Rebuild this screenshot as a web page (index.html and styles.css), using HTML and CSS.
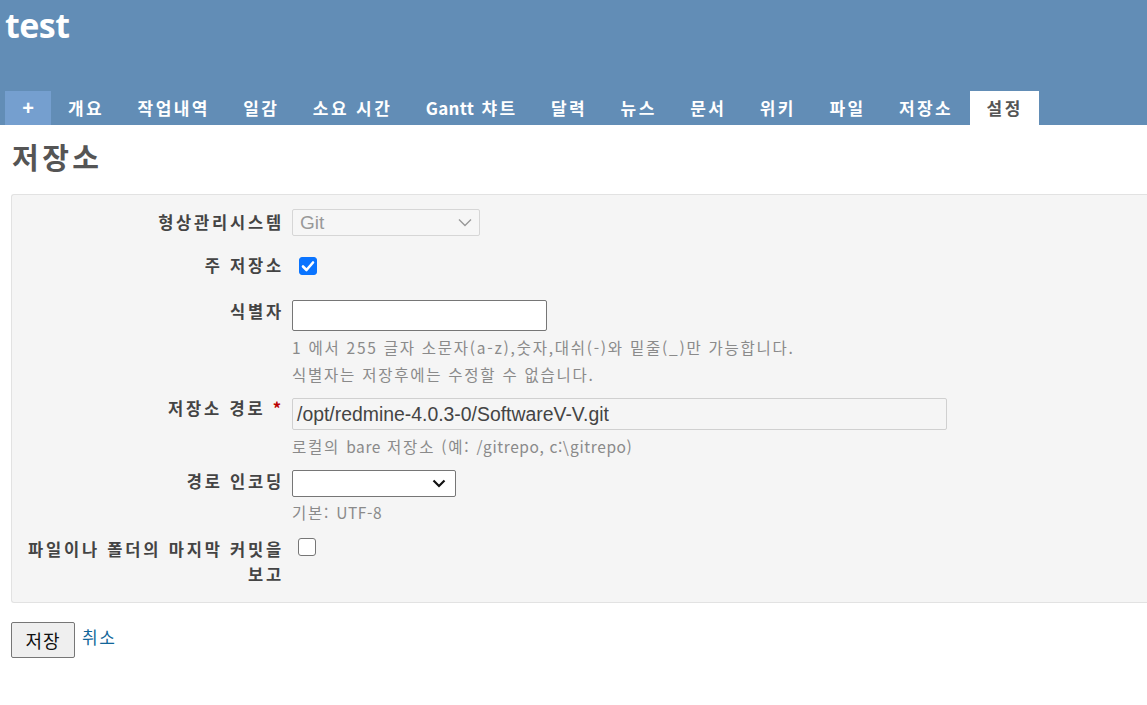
FILE: index.html
```html
<!DOCTYPE html>
<html lang="ko">
<head>
<meta charset="utf-8">
<title>저장소</title>
<link rel="stylesheet" href="styles.css">
</head>
<body>
<div class="header">
  <h1 class="site-title">test</h1>
  <ul class="tabs">
    <li class="tab new">+</li>
    <li class="tab">개요</li>
    <li class="tab">작업내역</li>
    <li class="tab">일감</li>
    <li class="tab">소요 시간</li>
    <li class="tab"><span class="latin">Gantt</span> 챠트</li>
    <li class="tab">달력</li>
    <li class="tab">뉴스</li>
    <li class="tab">문서</li>
    <li class="tab">위키</li>
    <li class="tab">파일</li>
    <li class="tab">저장소</li>
    <li class="tab selected">설정</li>
  </ul>
</div>
<div class="content">
  <h2 class="page-title">저장소</h2>
  <div class="box">
    <div class="row row-scm">
      <label class="lbl">형상관리시스템</label>
      <div class="field">
        <div class="select disabled"><span>Git</span>
          <svg class="chev" width="14" height="9" viewBox="0 0 14 9"><path d="M1 1.5 L7 7.5 L13 1.5" fill="none" stroke="#999" stroke-width="1.4"/></svg>
        </div>
      </div>
    </div>
    <div class="row row-check">
      <label class="lbl">주 저장소</label>
      <div class="field">
        <span class="checkbox checked">
          <svg width="18" height="18" viewBox="0 0 18 18"><path d="M4 9.5 L7.5 13 L14 5.5" fill="none" stroke="#fff" stroke-width="2.6" stroke-linecap="round" stroke-linejoin="round"/></svg>
        </span>
      </div>
    </div>
    <div class="row row-ident">
      <label class="lbl">식별자</label>
      <div class="field">
        <div class="input ident"></div>
        <p class="hint">1 에서 255 글자 소문자(a-z),숫자,대쉬(-)와 밑줄(_)만 가능합니다.</p>
        <p class="hint">식별자는 저장후에는 수정할 수 없습니다.</p>
      </div>
    </div>
    <div class="row row-path">
      <label class="lbl">저장소 경로 <span class="req">*</span></label>
      <div class="field">
        <div class="input path">/opt/redmine-4.0.3-0/SoftwareV-V.git</div>
        <p class="hint">로컬의 <span class="latin">bare</span> 저장소 (예: <span class="latin">/gitrepo, c:\gitrepo</span>)</p>
      </div>
    </div>
    <div class="row row-enc">
      <label class="lbl">경로 인코딩</label>
      <div class="field">
        <div class="select enc">
          <svg class="chev" width="14" height="9" viewBox="0 0 14 9"><path d="M1.5 1.5 L7 7 L12.5 1.5" fill="none" stroke="#111" stroke-width="2.2"/></svg>
        </div>
        <p class="hint">기본: <span class="latin">UTF-8</span></p>
      </div>
    </div>
    <div class="row row-last">
      <label class="lbl">파일이나 폴더의 마지막 커밋을 보고</label>
      <div class="field">
        <span class="checkbox"></span>
      </div>
    </div>
  </div>
  <div class="actions">
    <button class="btn" type="button">저장</button>
    <a class="link" href="#">취소</a>
  </div>
</div>
</body>
</html>
```

FILE: styles.css
```css
html, body {
  margin: 0;
  padding: 0;
  overflow: hidden;
}
body {
  font-family: "Liberation Sans", "Noto Sans CJK KR", sans-serif;
  color: #333;
  background: #fff;
  width: 1147px;
  height: 705px;
}
.header {
  background: #628db6;
  height: 125px;
  display: flex;
  flex-direction: column;
  justify-content: space-between;
  padding-left: 5px;
  box-sizing: border-box;
}
.site-title {
  margin: 0;
  padding-top: 3px;
  font-family: "Open Sans", "Noto Sans CJK KR", sans-serif;
  font-size: 34px;
  font-weight: 700;
  color: #fff;
  line-height: 44px;
  letter-spacing: -0.5px;
}
.tabs {
  list-style: none;
  margin: 0;
  padding: 0;
  display: flex;
  height: 34px;
}
.tab {
  padding: 0 16.5px 0 17px;
  font-family: "Noto Sans CJK KR", sans-serif;
  font-size: 17px;
  font-weight: 700;
  color: #fff;
  line-height: 34px;
  letter-spacing: 2.4px;
  white-space: nowrap;
}
.tab .latin {
  letter-spacing: 0.3px;
}
.tab.new {
  background: #759fcf;
  width: 46px;
  padding: 0;
  text-align: center;
  font-size: 20px;
  letter-spacing: 0;
  font-family: "Liberation Sans", sans-serif;
}
.tab.selected {
  background: #fff;
  color: #555;
}
.content {
  padding: 0 0 0 11px;
}
.page-title {
  margin: 0;
  padding: 12px 0 0 1px;
  height: 55px;
  box-sizing: border-box;
  font-family: "Noto Sans CJK KR", sans-serif;
  font-size: 29px;
  font-weight: 700;
  color: #555;
  line-height: 38px;
  letter-spacing: 3.5px;
}
.box {
  background: #f5f5f5;
  border: 1px solid #e2e2e2;
  border-right: none;
  border-radius: 3px 0 0 3px;
  width: 1200px;
  padding: 15px 0 16px 0;
  height: 409px;
  box-sizing: border-box;
  margin-top: 14px;
}
.row {
  display: flex;
  align-items: flex-start;
  box-sizing: border-box;
}
.lbl {
  width: 280px;
  text-align: right;
  padding-right: 8px;
  padding-left: 16px;
  box-sizing: border-box;
  font-family: "Noto Sans CJK KR", sans-serif;
  font-size: 16.5px;
  font-weight: 700;
  color: #444;
  line-height: 24px;
  letter-spacing: 2.8px;
  flex-shrink: 0;
}
.req {
  color: #bb0000;
}
.field {
  display: flex;
  flex-direction: column;
  align-items: flex-start;
}
.select {
  display: flex;
  align-items: center;
  justify-content: space-between;
  box-sizing: border-box;
  height: 27px;
  border-radius: 2px;
  padding: 0 7px;
  font-family: "Liberation Sans", sans-serif;
  font-size: 19px;
}
.select.disabled {
  width: 188px;
  border: 1px solid #d6d6d6;
  background: #f6f6f6;
  color: #999;
  margin-top: -1px;
}
.select.enc {
  width: 164px;
  border: 1px solid #767676;
  background: #fff;
  justify-content: flex-end;
  padding-right: 9px;
  margin-top: -1px;
}
.row-scm {
  height: 43px;
}
.row-check {
  height: 47px;
}
.row-ident {
  height: 100px;
  padding-top: 5px;
}
.row-ident .lbl {
  margin-top: -6px;
}
.row-path {
  height: 71px;
  padding-top: 4px;
}
.row-path .lbl {
  margin-top: -8px;
}
.row-enc {
  height: 66px;
}
.row-enc .lbl {
  margin-top: -2px;
}
.row-last .lbl {
  line-height: 25px;
}
.checkbox {
  display: inline-block;
  width: 18px;
  height: 18px;
  box-sizing: border-box;
  border: 1px solid #767676;
  border-radius: 3px;
  background: #fff;
  margin: 1px 0 0 6px;
}
.checkbox svg {
  display: block;
}
.checkbox.checked {
  background: #0a74ff;
  border-color: #0a74ff;
  margin-top: 4px;
  margin-left: 7px;
}
.checkbox.checked svg {
  margin: -1px;
}
.input {
  box-sizing: border-box;
  background: #fff;
  border-radius: 2px;
  font-family: "Liberation Sans", sans-serif;
  font-size: 19.4px;
  color: #444;
}
.input.ident {
  width: 255px;
  height: 31px;
  border: 1px solid #767676;
  margin-top: -5px;
}
.input.path {
  width: 655px;
  height: 32px;
  border: 1px solid #d0d0d0;
  background: #f5f5f5;
  padding: 0 4px;
  line-height: 30px;
  margin-top: -6px;
}
.hint {
  margin: 0;
  font-family: "Noto Sans CJK KR", sans-serif;
  font-size: 15.5px;
  color: #8a8a8a;
  line-height: 27px;
  letter-spacing: 1.75px;
}
.hint .latin {
  letter-spacing: 0.6px;
}
.input.ident + .hint {
  margin-top: 3px;
}
.input.path + .hint {
  margin-top: 3px;
}
.select.enc + .hint {
  margin-top: 2px;
}
.actions {
  display: flex;
  align-items: flex-start;
  gap: 7px;
  margin-top: 19px;
}
.btn {
  width: 64px;
  height: 36px;
  font-family: "Noto Sans CJK KR", sans-serif;
  font-size: 18px;
  color: #111;
  background: #efefef;
  border: 1px solid #767676;
  border-radius: 2px;
  padding: 0;
  line-height: 34px;
  letter-spacing: 1px;
}
.link {
  font-family: "Noto Sans CJK KR", sans-serif;
  font-size: 17px;
  color: #169;
  text-decoration: none;
  line-height: 30px;
  letter-spacing: 1.5px;
}
```
